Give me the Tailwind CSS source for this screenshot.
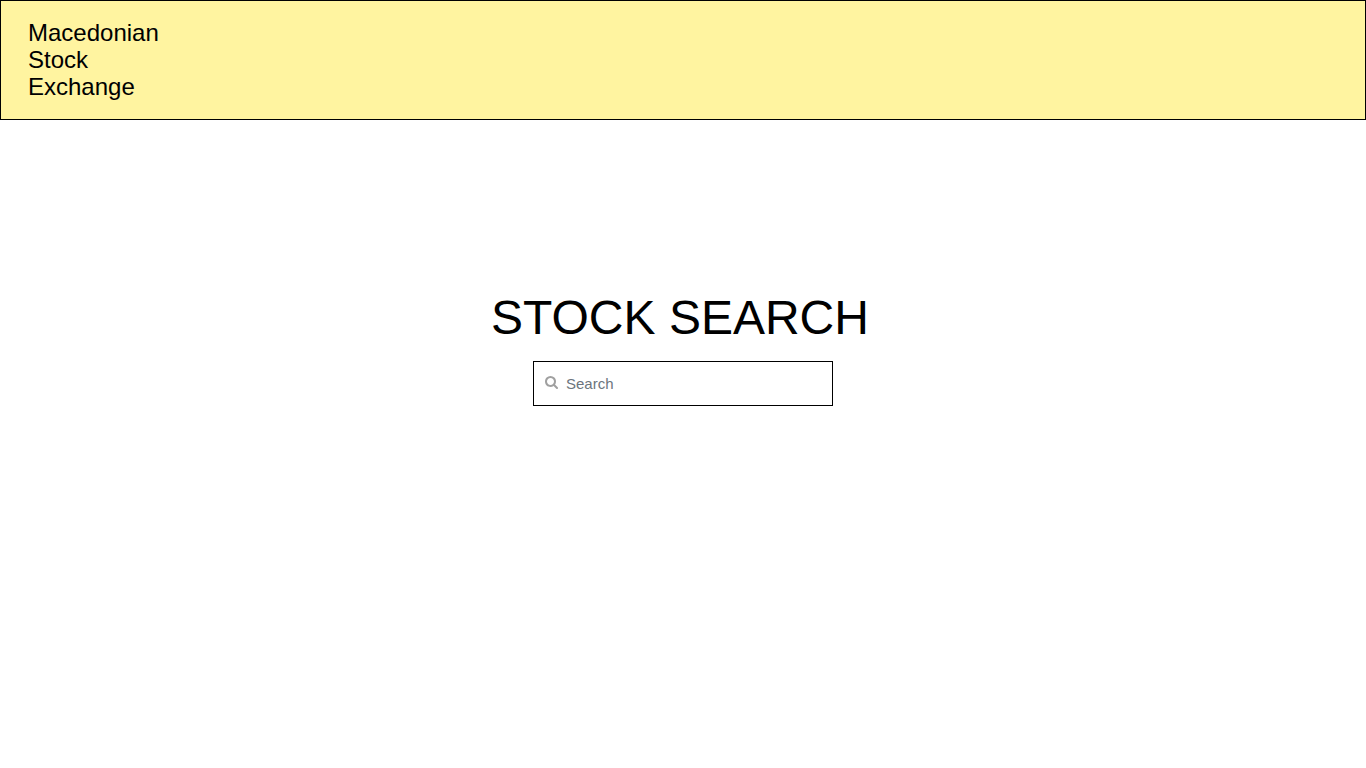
<!DOCTYPE html>
<html lang="en">
<head>
<meta charset="utf-8">
<title>Macedonian Stock Exchange</title>
<script src="https://cdn.jsdelivr.net/npm/@tailwindcss/browser@4"></script>
</head>
<body class="min-h-screen bg-white text-black font-['Liberation_Sans',Arial,sans-serif]">
<header class="flex items-center border border-black bg-[#fff4a0] px-[27px] pt-[18px] pb-[19px]">
<a href="#" class="text-2xl leading-[27px]">Macedonian<br>Stock<br>Exchange</a>
</header>
<main class="flex flex-col items-center pt-[169px]">
<h1 class="mr-1.5 text-5xl leading-[58px]">STOCK SEARCH</h1>
<form class="mt-[14px] flex w-[300px] items-center gap-2 border border-black py-[10px] pl-[11px] pr-2" role="search">
<label for="q" aria-label="Search" class="pb-[3px]">
<svg class="size-[13px] text-[#a0a0a0]" viewBox="0 0 1664 1664" fill="currentColor" aria-hidden="true"><path d="M1152 704q0-185-131.500-316.500T704 256 387.500 387.500 256 704t131.500 316.500T704 1152t316.500-131.500T1152 704zm512 832q0 52-38 90t-90 38q-54 0-90-38l-343-342q-179 124-399 124-143 0-273.500-55.500t-225-150-150-225T0 704t55.500-273.500 150-225 225-150T704 0t273.500 55.500 225 150 150 225T1408 704q0 220-124 399l343 343q37 37 37 90z"/></svg>
</label>
<input id="q" type="search" placeholder="Search" class="min-w-0 flex-1 bg-transparent text-[15px] leading-[23px] outline-none placeholder:text-[#6c757d]">
</form>
</main>
</body>
</html>
